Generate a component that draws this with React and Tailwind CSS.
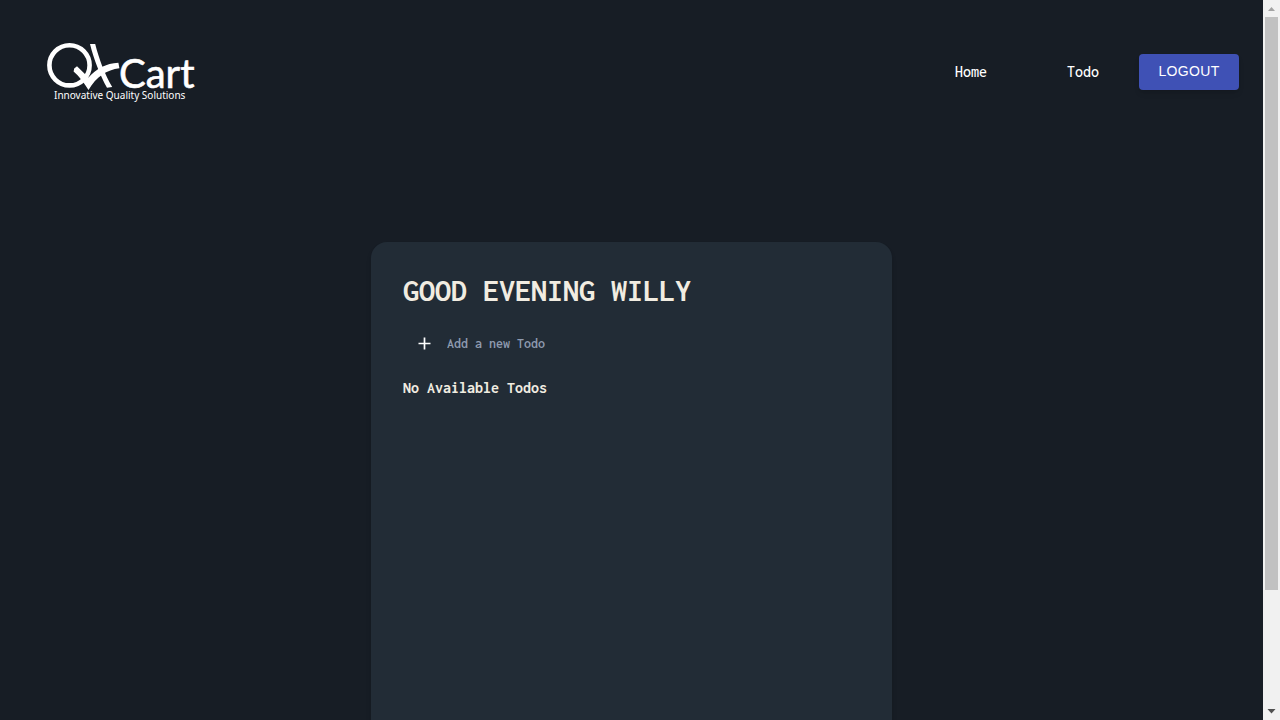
const MONO =
  "font-['Inconsolata','Noto_Sans_Mono_CJK_JP','Noto_Sans_CJK_JP',monospace] [font-feature-settings:'hwid']";

function Logo() {
  return (
    <svg viewBox="0 0 170 80" className="h-20 w-[170px]" role="img" aria-label="QXCart">
      <g fill="none" stroke="#fff">
        <circle cx="33.5" cy="33.3" r="20.1" strokeWidth="4.6" />
      </g>
      <path d="M54 12 L59.2 12 C63 27 69 43 76.2 55 L71 55.8 C64 43 58 28 54 12 Z" fill="#fff" />
      <path
        d="M37.6 39.5 L38.2 36.5 L41 34.2 L52.5 45.5 C60 37 70 31.3 82.4 30.8 L83.4 36.2 C71 37.5 60 45 52.5 58 C48 51 43 44 37.6 39.5 Z"
        fill="#fff"
      />
      <text x="83" y="55.5" fill="#fff" stroke="#fff" strokeWidth="0.6" fontSize="40" className="font-['Lato',sans-serif]">
        Cart
      </text>
      <text x="18" y="67" fill="#fff" fontSize="10" className="font-['Noto_Sans',sans-serif]">
        Innovative Quality Solutions
      </text>
    </svg>
  );
}

function Header() {
  return (
    <header className="flex h-36 items-center justify-between pl-9 pr-6">
      <a href="#home">
        <Logo />
      </a>
      <nav className="flex items-center text-base font-medium text-white">
        <a href="#home" className="px-10">Home</a>
        <a href="#todo" className="px-10">Todo</a>
        <button
          type="button"
          className="w-[100px] rounded bg-[#3f51b5] pb-[9px] pt-[7px] font-['Liberation_Sans',sans-serif] text-sm font-normal leading-5 tracking-wide shadow-md"
        >
          LOGOUT
        </button>
      </nav>
    </header>
  );
}

function TodoCard() {
  return (
    <main className="mx-auto mt-[98px] min-h-[520px] w-[521px] rounded-2xl bg-[#222c36] p-8 text-[#f1ece1] shadow-md">
      <h1 className="text-[32px] font-bold leading-[34px]">GOOD EVENING WILLY</h1>
      <form className="mt-[18px] flex h-9 items-center gap-3 pl-3">
        <button type="submit" aria-label="Add todo">
          <svg viewBox="0 0 20 20" className="size-5" fill="none" stroke="#fff" strokeWidth="1.7">
            <path d="M9.5 3.5v12M3.5 9.5h12" />
          </svg>
        </button>
        <input
          aria-label="Add a new Todo"
          placeholder="Add a new Todo"
          className="min-w-0 flex-1 bg-transparent text-sm font-semibold outline-none placeholder:text-[#8f9bb0]"
        />
      </form>
      <h2 className="mt-[14px] text-base font-bold leading-6">No Available Todos</h2>
    </main>
  );
}

function ScrollRail() {
  return (
    <div aria-hidden="true" className="flex w-[17px] shrink-0 flex-col items-center bg-[#f1f1f1]">
      <svg viewBox="0 0 17 17" className="size-[17px] shrink-0" fill="#a3a3a3">
        <path d="M5 11 L8.5 7 L12 11Z" />
      </svg>
      <div className="w-[13px] grow-[573] bg-[#c1c1c1]" />
      <div className="grow-[113]" />
      <svg viewBox="0 0 17 17" className="size-[17px] shrink-0" fill="#505050">
        <path d="M4.5 6 L8.5 10.5 L12.5 6Z" />
      </svg>
    </div>
  );
}

export default function App() {
  return (
    <div className={`flex h-screen overflow-hidden bg-[#171d25] ${MONO}`}>
      <div className="min-w-0 flex-1 overflow-hidden">
        <Header />
        <TodoCard />
      </div>
      <ScrollRail />
    </div>
  );
}
